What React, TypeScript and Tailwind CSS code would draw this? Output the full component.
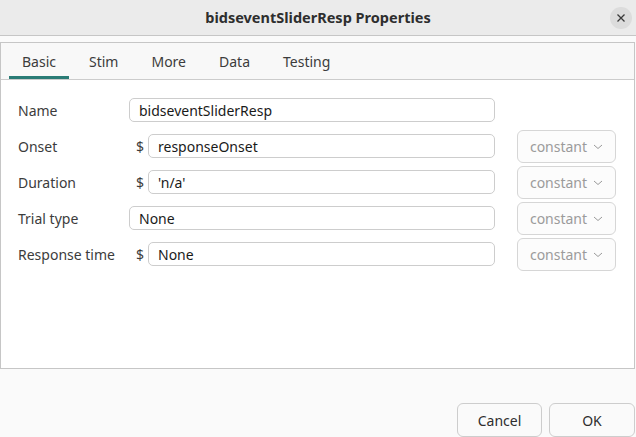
import React from "react";

const font = { fontFamily: '"Noto Sans", "Open Sans", sans-serif' };

function Chevron() {
  return (
    <svg width="10" height="6" viewBox="0 0 10 6" className="ml-[6px] mt-[2px]">
      <path d="M1 1 L5 4.5 L9 1" fill="none" stroke="#9a9a9a" strokeWidth="1" />
    </svg>
  );
}

function Field({ value, dollar }: { value: string; dollar?: boolean }) {
  return (
    <div className="flex items-center">
      {dollar && <span className="w-[19px] pl-[7px] text-[#3c3c3c]">$</span>}
      <div className="flex-1 h-[24px] rounded-[5px] border border-[#cdcdcd] bg-white flex items-center pl-[9px] text-[#1a1a1a]">
        {value}
      </div>
    </div>
  );
}

function Constant() {
  return (
    <div className="h-[33px] w-[99px] rounded-[6px] border border-[#d6d6d6] bg-[#fcfcfc] flex items-center justify-center text-[#9b9b9b]">
      constant
      <Chevron />
    </div>
  );
}

export default function App() {
  const rows: { label: string; value: string; dollar?: boolean; constant?: boolean }[] = [
    { label: "Name", value: "bidseventSliderResp" },
    { label: "Onset", value: "responseOnset", dollar: true, constant: true },
    { label: "Duration", value: "'n/a'", dollar: true, constant: true },
    { label: "Trial type", value: "None", constant: true },
    { label: "Response time", value: "None", dollar: true, constant: true },
  ];
  const tabs = ["Basic", "Stim", "More", "Data", "Testing"];
  return (
    <div className="w-[636px] h-[437px] flex flex-col bg-[#fafafa] text-[14px] overflow-hidden" style={font}>
      <div className="relative h-[36px] shrink-0 bg-[#ebebeb] border-b border-[#c6c6c6] flex items-center justify-center">
        <span className="font-bold text-[14.5px] text-[#2e2e2e]">bidseventSliderResp Properties</span>
        <div className="absolute right-[4px] top-[7px] w-[22px] h-[22px] rounded-full bg-[#dcdcdc] flex items-center justify-center">
          <svg width="10" height="10" viewBox="0 0 10 10">
            <path d="M1.5 1.5 L8.5 8.5 M8.5 1.5 L1.5 8.5" stroke="#3a3a3a" strokeWidth="1.3" />
          </svg>
        </div>
      </div>
      <div className="pt-[6px] pr-[1px] flex flex-col h-[333px] shrink-0">
        <div className="flex-1 flex flex-col border border-[#c6c6c6] bg-white">
          <div className="h-[37px] shrink-0 bg-[#f8f8f8] border-b border-[#cccccc] flex pl-[8px] gap-[7px]">
            {tabs.map((t, i) => (
              <div
                key={t}
                className={
                  "px-[13px] flex items-center text-[#3c3c3c] " +
                  (i === 0 ? "border-b-[3px] border-[#2a7c76] pt-[3px]" : "")
                }
              >
                {t}
              </div>
            ))}
          </div>
          <div className="pt-[12px] pl-[17px] pr-[17px] grid grid-cols-[111px_366px_121px] auto-rows-[36px] items-center">
            {rows.map((r) => (
              <React.Fragment key={r.label}>
                <span className="text-[#3c3c3c]">{r.label}</span>
                <Field value={r.value} dollar={r.dollar} />
                <div className="flex justify-end">{r.constant && <Constant />}</div>
              </React.Fragment>
            ))}
          </div>
        </div>
      </div>
      <div className="flex-1 flex items-end justify-end gap-[7px] pr-[1px] pb-[0px]">
        <div className="w-[85px] h-[34px] rounded-[6px] border border-[#cdcdcd] bg-[#fafafa] flex items-center justify-center text-[#2e2e2e]">
          Cancel
        </div>
        <div className="w-[86px] h-[34px] rounded-[6px] border border-[#cdcdcd] bg-[#fafafa] flex items-center justify-center text-[#2e2e2e]">
          OK
        </div>
      </div>
    </div>
  );
}
